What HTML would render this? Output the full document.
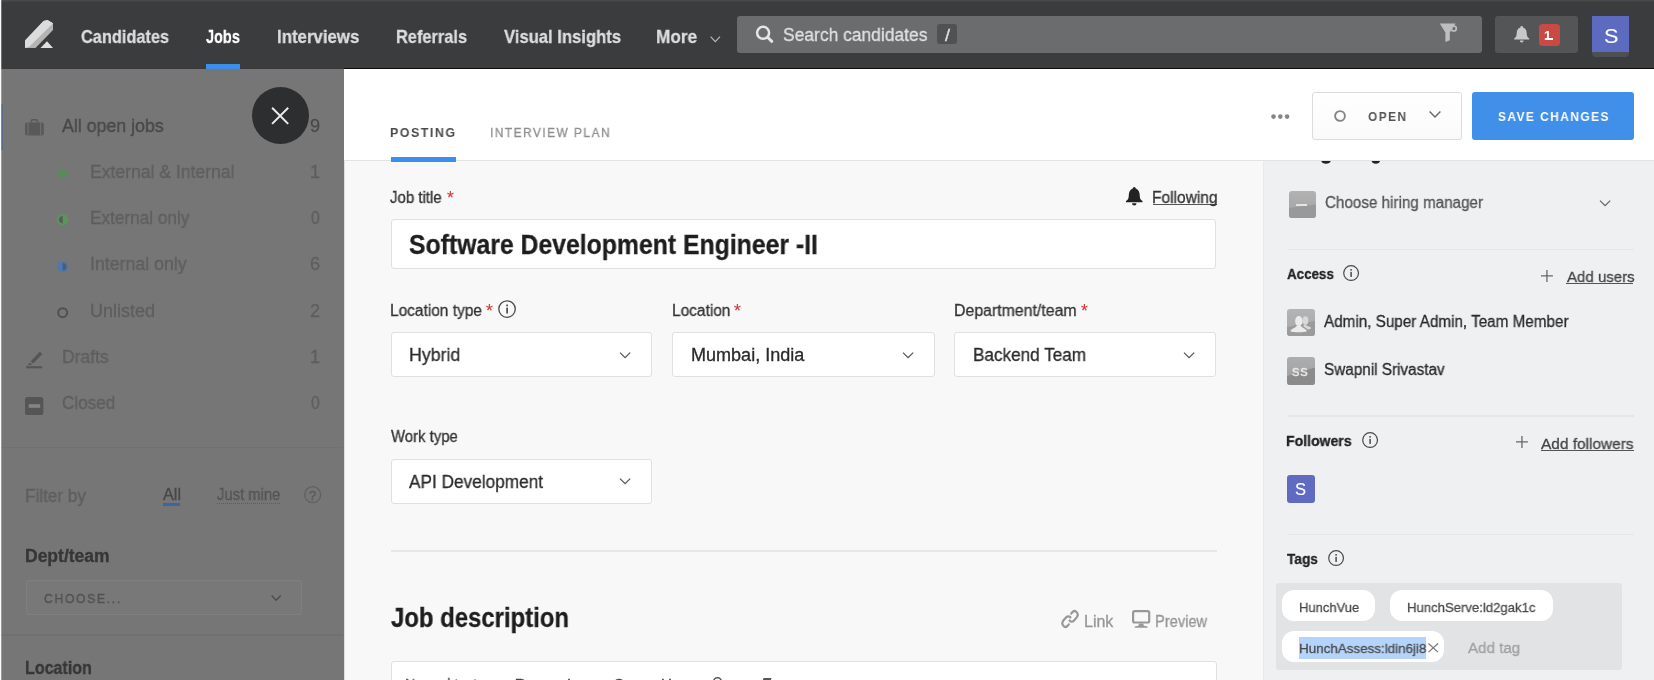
<!DOCTYPE html>
<html><head><meta charset="utf-8"><title>Jobs</title>
<style>
*{box-sizing:border-box;margin:0;padding:0}
html,body{width:1654px;height:680px;overflow:hidden;background:#fff;font-family:"Liberation Sans",sans-serif}
body{position:relative}
.a{position:absolute}
.t{-webkit-text-stroke:0.3px;will-change:transform;position:absolute;white-space:pre;line-height:1;transform-origin:0 50%;font-family:"Liberation Sans",sans-serif}
svg{position:absolute;overflow:visible}

</style></head>
<body>
<!-- backgrounds -->
<div class="a" style="left:0;top:69px;width:344px;height:611px;background:#767676"></div>
<div class="a" style="left:344px;top:161px;width:919px;height:519px;background:#f8f8f8;border-left:1px solid #dedede"></div>
<div class="a" style="left:1263px;top:161px;width:391px;height:519px;background:#eff0f2;box-shadow:inset 1px 0 0 #e9eaec"></div>
<!-- hiring manager cut-off text hint (descenders of g) -->
<svg style="left:1320px;top:158px" width="64" height="8" viewBox="0 0 64 8"><path d="M1.2,2.5 C1.5,6.8 10.5,6.8 10.8,2.5 Z" fill="#222"/><path d="M51.5,2.5 C51.8,6.8 59.8,6.8 60.1,2.5 Z" fill="#222"/></svg>
<!-- main header (white) -->
<div class="a" style="left:344px;top:69px;width:1310px;height:92px;background:#fff;border-bottom:1px solid #e1e3e4"></div>

<!-- NAV -->
<div class="a" style="left:0;top:0;width:1654px;height:69px;background:#3b3c3e;border-bottom:1px solid #0c0c0d"></div>
<div class="a" style="left:0;top:68px;width:344px;height:1px;background:#39393b"></div>
<div class="a" style="left:0;top:0;width:1654px;height:2px;background:linear-gradient(#4c4d4f,#3f4042)"></div>
<div class="a" style="left:206px;top:64px;width:34px;height:5px;background:#3d8eea"></div>
<!-- logo -->
<svg style="left:25px;top:20px" width="28" height="28" viewBox="0 0 28 28">
  <polygon points="0,20.5 18.5,1 22.5,0 28,3.2 28,10 10.5,28 0,28" fill="#b4b4b4"/>
  <polygon points="0,20.5 18.5,1 22.5,0 28,3.2 4.5,26.5 0,28" fill="#dcdcdc"/>
  <polygon points="15.5,28 22,21.2 28,28" fill="#e0e0e0"/>
</svg>
<!-- more chevron -->
<svg style="left:710px;top:36px" width="11" height="7" viewBox="0 0 11 7"><polyline points="0.6,0.6 5.3,5.6 10,0.6" fill="none" stroke="#b8b8b8" stroke-width="1.2"/></svg>
<!-- search box -->
<div class="a" style="left:737px;top:15.5px;width:744.5px;height:37px;background:#6b6c6e;border-radius:3px"></div>
<svg style="left:755px;top:25px" width="19" height="19" viewBox="0 0 19 19"><circle cx="8.1" cy="7.8" r="6" fill="none" stroke="#e6e6e6" stroke-width="2.5"/><line x1="12.8" y1="12.5" x2="16.8" y2="16.3" stroke="#e6e6e6" stroke-width="3" stroke-linecap="round"/></svg>
<div class="a" style="left:937.4px;top:24px;width:20px;height:20px;background:#505153;border-radius:3px"></div>
<!-- filter icon -->
<svg style="left:1439px;top:23px" width="19" height="20" viewBox="0 0 19 20"><path d="M0.8,0.5 H16.6 L10.8,9.6 V17.2 L6.4,19 V9.5 Z" fill="#bebebe"/><circle cx="14.8" cy="5.5" r="2.5" fill="none" stroke="#bebebe" stroke-width="1.7"/></svg>
<!-- bell box -->
<div class="a" style="left:1495.4px;top:15.5px;width:82.6px;height:37px;background:#545557;border-radius:3px"></div>
<svg style="left:1514px;top:26px" width="15.4" height="16.6" viewBox="0 0 16 17"><path d="M8,0 C8.9,0 9.4,0.6 9.4,1.4 C12,2.2 13.2,4.5 13.2,7.5 C13.2,10.5 14,11.6 15.8,12.8 V13.9 H0.2 V12.8 C2,11.6 2.8,10.5 2.8,7.5 C2.8,4.5 4,2.2 6.6,1.4 C6.6,0.6 7.1,0 8,0 Z" fill="#c8c8c8"/><path d="M6,14.9 H10 A2,2 0 0 1 6,14.9Z" fill="#c8c8c8"/></svg>
<div class="a" style="left:1539.3px;top:24.4px;width:20.8px;height:21.2px;background:#c94a45;border-radius:3.5px"></div>
<div class="a" style="left:1544.8px;top:38.4px;width:8px;height:1.6px;background:#fff"></div>
<!-- avatar -->
<div class="a" style="left:1592.2px;top:40px;width:37.2px;height:16.6px;background:#4e4f52;border-radius:0 0 4px 4px"></div>
<div class="a" style="left:1592.2px;top:15.6px;width:37.2px;height:36.8px;background:#5c6bc0"></div>

<!-- close button -->
<div class="a" style="left:252.1px;top:87.3px;width:57.2px;height:57.2px;border-radius:50%;background:#2d2e30"></div>
<svg style="left:271.4px;top:106.6px" width="18.3" height="17.7" viewBox="0 0 18 18"><path d="M0.8,0.8 L17.2,17.2 M17.2,0.8 L0.8,17.2" stroke="#ececec" stroke-width="2" fill="none"/></svg>

<!-- HEADER RIGHT -->
<svg style="left:1270.7px;top:113.6px" width="18.6" height="5.2" viewBox="0 0 18.6 5.2"><circle cx="2.5" cy="2.6" r="2.3" fill="#858585"/><circle cx="9.3" cy="2.6" r="2.3" fill="#858585"/><circle cx="16.1" cy="2.6" r="2.3" fill="#858585"/></svg>
<div class="a" style="left:1312.4px;top:92.4px;width:150.1px;height:47.2px;background:linear-gradient(#fff,#fafafa);border:1px solid #dcdcdc;border-radius:3px"></div>
<svg style="left:1333.8px;top:110.4px" width="12" height="12" viewBox="0 0 12 12"><circle cx="6" cy="6" r="4.9" fill="none" stroke="#858585" stroke-width="1.9"/></svg>
<svg style="left:1429px;top:111px" width="12" height="7" viewBox="0 0 12 7"><polyline points="0.6,0.6 6,6.1 11.4,0.6" fill="none" stroke="#666" stroke-width="1.4"/></svg>
<div class="a" style="left:1472px;top:92.4px;width:161.5px;height:47.2px;background:#408fe9;border-radius:3px"></div>

<!-- tabs underline -->
<div class="a" style="left:390.5px;top:157.4px;width:65.5px;height:4.6px;background:#3d8eea"></div>

<!-- FORM -->
<svg style="left:1125.9px;top:186.7px" width="16.5" height="18.7" viewBox="0 0 16 18"><path d="M8,0 C8.9,0 9.4,0.7 9.4,1.5 C12,2.4 13.3,4.8 13.3,8 C13.3,11.2 14,12.4 16,13.6 V14.8 H0 V13.6 C2,12.4 2.7,11.2 2.7,8 C2.7,4.8 4,2.4 6.6,1.5 C6.6,0.7 7.1,0 8,0 Z" fill="#222"/><path d="M5.8,15.8 H10.2 A2.2,2.2 0 0 1 5.8,15.8Z" fill="#222"/></svg>
<div class="a" style="left:1153px;top:204px;width:63.5px;height:1.2px;background:#555"></div>
<div class="a" style="left:390.8px;top:219px;width:825.4px;height:50px;background:#fff;border:1px solid #dfe0e1;border-radius:3px"></div>
<!-- info icon near location type -->
<svg style="left:498.3px;top:300px" width="18.1" height="18.1" viewBox="0 0 18 18"><circle cx="9" cy="9" r="8.2" fill="none" stroke="#4a4a4a" stroke-width="1.3"/><rect x="8.2" y="7.6" width="1.7" height="5.8" fill="#4a4a4a"/><rect x="8.2" y="4.5" width="1.7" height="1.8" fill="#4a4a4a"/></svg>
<div class="a" style="left:390.9px;top:332.1px;width:261.6px;height:45.3px;background:#fff;border:1px solid #dfe0e1;border-radius:3px"></div>
<div class="a" style="left:672.3px;top:332.1px;width:262.5px;height:45.3px;background:#fff;border:1px solid #dfe0e1;border-radius:3px"></div>
<div class="a" style="left:954.1px;top:332.1px;width:261.9px;height:45.3px;background:#fff;border:1px solid #dfe0e1;border-radius:3px"></div>
<div class="a" style="left:390.9px;top:458.5px;width:261.6px;height:45.3px;background:#fff;border:1px solid #dfe0e1;border-radius:3px"></div>
<svg style="left:619.4px;top:351.7px" width="12.2" height="6.6" viewBox="0 0 12 7"><polyline points="0.6,0.6 6,6.1 11.4,0.6" fill="none" stroke="#555" stroke-width="1.3"/></svg>
<svg style="left:901.8px;top:351.7px" width="12.2" height="6.6" viewBox="0 0 12 7"><polyline points="0.6,0.6 6,6.1 11.4,0.6" fill="none" stroke="#555" stroke-width="1.3"/></svg>
<svg style="left:1182.9px;top:351.7px" width="12.2" height="6.6" viewBox="0 0 12 7"><polyline points="0.6,0.6 6,6.1 11.4,0.6" fill="none" stroke="#555" stroke-width="1.3"/></svg>
<svg style="left:619.4px;top:477.9px" width="12.2" height="6.6" viewBox="0 0 12 7"><polyline points="0.6,0.6 6,6.1 11.4,0.6" fill="none" stroke="#555" stroke-width="1.3"/></svg>
<div class="a" style="left:391px;top:550px;width:826px;height:2px;background:#e7e7e8"></div>
<!-- link icon (diagonal chain) -->
<svg style="left:1061.4px;top:610.2px" width="18" height="18" viewBox="0 0 18 18"><g transform="translate(0.2,-1.2) scale(0.98,1.13)" fill="none" stroke="#989898" stroke-width="2.1" stroke-linecap="round"><path d="M10.2,4.2 L11.6,2.8 a3.2,3.2 0 0 1 4.5,4.5 L13,10.4 a3.2,3.2 0 0 1 -4.5,0"/><path d="M7.8,13.8 L6.4,15.2 a3.2,3.2 0 0 1 -4.5,-4.5 L5,7.6 a3.2,3.2 0 0 1 4.5,0"/></g></svg>
<!-- preview icon -->
<svg style="left:1131.8px;top:610.2px" width="18.3" height="17.8" viewBox="0 0 18.3 17.8"><rect x="1.1" y="1.1" width="16.1" height="11.4" rx="1.6" fill="none" stroke="#989898" stroke-width="2.2"/><path d="M7,13.4 H11.3 L11.8,15.8 L15.6,16.6 V17.8 H2.7 V16.6 L6.5,15.8 Z" fill="#989898"/></svg>
<!-- editor box -->
<div class="a" style="left:390.5px;top:661px;width:826px;height:30px;background:#fff;border:1px solid #dfe0e1;border-radius:3px 3px 0 0"></div>
<svg style="left:712px;top:676px" width="11" height="6" viewBox="0 0 11 6"><path d="M1.5,6 a4,4.2 0 0 1 8,0" fill="none" stroke="#555" stroke-width="1.6"/></svg>
<div class="a" style="left:763px;top:677.5px;width:8px;height:3px;background:#555;transform:skewX(-20deg)"></div>

<!-- RIGHT SIDEBAR -->
<div class="a" style="left:1288.5px;top:190.5px;width:27.5px;height:27.9px;border-radius:3px;overflow:hidden;background:linear-gradient(#b2b2b2,#a3a3a3)"><div class="a" style="left:-4px;top:15px;width:40px;height:20px;background:#999;transform:rotate(-7deg)"></div></div>
<div class="a" style="left:1296.3px;top:203.8px;width:10.5px;height:2.1px;background:#e4e4e4"></div>
<svg style="left:1599px;top:199.6px" width="12.2" height="6.6" viewBox="0 0 12 7"><polyline points="0.6,0.6 6,6.1 11.4,0.6" fill="none" stroke="#666" stroke-width="1.3"/></svg>
<div class="a" style="left:1288px;top:248.6px;width:346px;height:1.2px;background:#e5e6e8"></div>
<div class="a" style="left:1288px;top:415.4px;width:346px;height:1.2px;background:#e5e6e8"></div>
<div class="a" style="left:1288px;top:534px;width:346px;height:1.2px;background:#e5e6e8"></div>
<!-- info icons -->
<svg style="left:1343.3px;top:265.3px" width="16.2" height="16.2" viewBox="0 0 16 16"><circle cx="8" cy="8" r="7.3" fill="none" stroke="#4a4a4a" stroke-width="1.2"/><rect x="7.25" y="6.8" width="1.5" height="5" fill="#4a4a4a"/><rect x="7.25" y="4" width="1.5" height="1.6" fill="#4a4a4a"/></svg>
<svg style="left:1362px;top:432px" width="16.2" height="16.2" viewBox="0 0 16 16"><circle cx="8" cy="8" r="7.3" fill="none" stroke="#4a4a4a" stroke-width="1.2"/><rect x="7.25" y="6.8" width="1.5" height="5" fill="#4a4a4a"/><rect x="7.25" y="4" width="1.5" height="1.6" fill="#4a4a4a"/></svg>
<svg style="left:1328.3px;top:550.2px" width="16.2" height="16.2" viewBox="0 0 16 16"><circle cx="8" cy="8" r="7.3" fill="none" stroke="#4a4a4a" stroke-width="1.2"/><rect x="7.25" y="6.8" width="1.5" height="5" fill="#4a4a4a"/><rect x="7.25" y="4" width="1.5" height="1.6" fill="#4a4a4a"/></svg>
<!-- plus icons -->
<svg style="left:1541.3px;top:269.6px" width="11.9" height="11.9" viewBox="0 0 12 12"><path d="M6,0 V12 M0,6 H12" stroke="#666" stroke-width="1.3"/></svg>
<svg style="left:1516.4px;top:436.4px" width="11.9" height="11.9" viewBox="0 0 12 12"><path d="M6,0 V12 M0,6 H12" stroke="#666" stroke-width="1.3"/></svg>
<div class="a" style="left:1566.2px;top:282.7px;width:67.2px;height:1.3px;background:#555"></div>
<div class="a" style="left:1541.1px;top:450px;width:92.5px;height:1.3px;background:#555"></div>
<!-- avatars -->
<div class="a" style="left:1287.3px;top:308.6px;width:27.4px;height:27.9px;border-radius:3px;overflow:hidden;background:linear-gradient(#b4b4b4,#a8a8a8)"><div class="a" style="left:-6px;top:15.2px;width:42px;height:24px;background:#9b9b9b;transform:rotate(-13deg)"></div></div>
<svg style="left:1287.3px;top:308.6px" width="27.4" height="27.9" viewBox="0 0 27.4 27.9"><g fill="#d9d9d9"><ellipse cx="18.4" cy="11.6" rx="2.9" ry="4.4"/><path d="M17.2,15.4 L23.6,18.2 C24.3,18.8 24.1,19.7 23.1,20.1 L20.6,20.5 C19.8,18.9 17.4,18.4 16.2,17.2 Z"/></g><g fill="#ebebeb"><ellipse cx="11.8" cy="12.1" rx="3.7" ry="5.1"/><path d="M3.5,22.6 C3.5,19.5 8.5,19.7 9.8,16.6 H13.8 C15.1,19.7 19.7,19.5 19.7,22.6 C17,23.5 6,23.5 3.5,22.6 Z"/></g></svg>
<div class="a" style="left:1287.3px;top:357.1px;width:27.5px;height:27.5px;border-radius:3px;overflow:hidden;background:linear-gradient(#adadad,#a0a0a0)"><div class="a" style="left:-6px;top:15.4px;width:42px;height:24px;background:#8b8b8b;transform:rotate(-17deg)"></div></div>
<div class="a" style="left:1287px;top:475.3px;width:27.8px;height:27.7px;border-radius:3px;background:#5f6bc1"></div>
<!-- tags -->
<div class="a" style="left:1275.6px;top:583.3px;width:346.3px;height:86.3px;background:#e2e3e5;border-radius:3px"></div>
<div class="a" style="left:1281.6px;top:590.2px;width:93.5px;height:31.3px;border-radius:12px;background:#fff"></div>
<div class="a" style="left:1389.7px;top:590.2px;width:163.3px;height:31.3px;border-radius:12px;background:#fff"></div>
<div class="a" style="left:1281.6px;top:631.4px;width:162.2px;height:30.8px;border-radius:12px;background:#fff"></div>
<div class="a" style="left:1299.1px;top:637px;width:127.1px;height:21.9px;background:#b5d4fb"></div>
<svg style="left:1428.4px;top:643.2px" width="10.5" height="9.6" viewBox="0 0 11 10"><path d="M0.5,0.5 L10.5,9.5 M10.5,0.5 L0.5,9.5" stroke="#777" stroke-width="1.3"/></svg>

<!-- LEFT SIDEBAR -->
<!-- briefcase -->
<svg style="left:25.4px;top:119px" width="18.8" height="16.4" viewBox="0 0 18.8 16.4"><path d="M6.4,3.6 V1.8 a1,1 0 0 1 1,-1 h4 a1,1 0 0 1 1,1 V3.6" fill="none" stroke="#595959" stroke-width="1.5"/><rect x="0" y="3.4" width="18.8" height="13" rx="2" fill="#595959"/><rect x="2.6" y="3.4" width="0.9" height="13" fill="#767676"/><rect x="15.3" y="3.4" width="0.9" height="13" fill="#767676"/></svg>
<!-- status dots -->
<svg style="left:56.9px;top:168.1px" width="11" height="11" viewBox="0 0 11 11"><circle cx="5.5" cy="5.5" r="4.6" fill="#598a5c"/></svg>
<svg style="left:56.7px;top:214.3px" width="11.4" height="11.4" viewBox="0 0 11.4 11.4"><circle cx="5.7" cy="5.7" r="4.7" fill="#5a5a5a" stroke="#5a955e" stroke-width="1.9"/><path d="M5.7,1 a4.7,4.7 0 0 1 0,9.4 Z" fill="#5a955e"/></svg>
<svg style="left:56.7px;top:260.6px" width="11.4" height="11.4" viewBox="0 0 11.4 11.4"><circle cx="5.7" cy="5.7" r="4.7" fill="#5a5a5a" stroke="#4a79b6" stroke-width="1.9"/><path d="M5.7,1 a4.7,4.7 0 0 0 0,9.4 Z" fill="#4a79b6"/></svg>
<svg style="left:56.7px;top:306.8px" width="11.4" height="11.4" viewBox="0 0 11.4 11.4"><circle cx="5.7" cy="5.7" r="4.5" fill="none" stroke="#505050" stroke-width="2"/></svg>
<!-- drafts icon -->
<svg style="left:26.4px;top:351.4px" width="17.5" height="17.5" viewBox="0 0 17.5 17.5"><path d="M4.6,10.6 L13.8,0.8 L16.4,3 L7.2,12.6 Z" fill="#555"/><path d="M3.6,11.6 L6.2,13.6 L1.6,14.6 Z" fill="#555"/><rect x="0.2" y="15.2" width="16" height="2.1" fill="#555"/></svg>
<!-- closed icon -->
<svg style="left:25.4px;top:396.7px" width="18.3" height="18.1" viewBox="0 0 18.3 18.1"><rect x="0" y="0" width="18.3" height="18.1" rx="2.6" fill="#555"/><rect x="3.7" y="7.3" width="11.5" height="3.5" rx="0.5" fill="#858585"/></svg>
<div class="a" style="left:0;top:447px;width:343px;height:1.4px;background:#707070"></div>
<div class="a" style="left:162.9px;top:503.4px;width:17px;height:3.1px;background:#3a66a8"></div>
<div class="a" style="left:217.3px;top:503.2px;width:63.1px;height:0;border-top:1px dotted #5c5c5c"></div>
<svg style="left:303.7px;top:485.8px" width="17.4" height="17.4" viewBox="0 0 17.4 17.4"><circle cx="8.7" cy="8.7" r="8" fill="none" stroke="#606060" stroke-width="1.3"/></svg>
<div class="a" style="left:26px;top:579.6px;width:275.6px;height:35.4px;border:1px solid #7f7f7f;border-radius:3px;background:#787878"></div>
<svg style="left:271px;top:594.7px" width="10.3" height="6" viewBox="0 0 10.3 6"><polyline points="0.6,0.5 5.15,5.2 9.7,0.5" fill="none" stroke="#4c4c4c" stroke-width="1.3"/></svg>
<div class="a" style="left:0;top:634.2px;width:343px;height:1.4px;background:#707070"></div>
<!-- left edge strip -->
<div class="a" style="left:0;top:0;width:1px;height:680px;background:#fbfbfb"></div>
<div class="a" style="left:1px;top:0;width:1px;height:680px;background:rgba(255,255,255,0.27)"></div>
<div class="a" style="left:1px;top:104px;width:1px;height:46px;background:#7088ae"></div>
<div class="a" style="left:2px;top:104px;width:1px;height:46px;background:rgba(58,95,150,0.45)"></div>

<span class="t" style="left:81.00px;top:28px;font-size:18.5px;color:#dddddd;font-weight:700;transform:scaleX(0.8825);">Candidates</span>
<span class="t" style="left:205.90px;top:28px;font-size:18.5px;color:#ffffff;font-weight:700;transform:scaleX(0.7828);">Jobs</span>
<span class="t" style="left:276.80px;top:28px;font-size:18.5px;color:#dddddd;font-weight:700;transform:scaleX(0.9096);">Interviews</span>
<span class="t" style="left:395.60px;top:28px;font-size:18.5px;color:#dddddd;font-weight:700;transform:scaleX(0.8853);">Referrals</span>
<span class="t" style="left:503.80px;top:28px;font-size:18.5px;color:#dddddd;font-weight:700;transform:scaleX(0.8984);">Visual Insights</span>
<span class="t" style="left:656.40px;top:28px;font-size:18.5px;color:#dddddd;font-weight:700;transform:scaleX(0.9281);">More</span>
<span class="t" style="left:783.00px;top:25px;font-size:19px;color:#e0e0e0;transform:scaleX(0.9175);">Search candidates</span>
<span class="t" style="left:945.00px;top:28px;font-size:16px;color:#e0e0e0;transform:scaleX(1.1228);">/</span>
<span class="t" style="left:1543.90px;top:29px;font-size:13px;color:#fff;font-weight:700;-webkit-text-stroke:0;">1</span>
<span class="t" style="left:1603.80px;top:25px;font-size:21px;color:#fff;transform:scaleX(1.0306);-webkit-text-stroke:0.1px;">S</span>
<span class="t" style="left:389.90px;top:126px;font-size:13px;color:#4a4a4a;font-weight:700;letter-spacing:1.6px;transform:scaleX(0.9552);-webkit-text-stroke:0;">POSTING</span>
<span class="t" style="left:489.90px;top:126px;font-size:13px;color:#8e8e8e;letter-spacing:1.6px;transform:scaleX(0.9175);">INTERVIEW PLAN</span>
<span class="t" style="left:1368.20px;top:110px;font-size:13px;color:#555;font-weight:700;letter-spacing:1.6px;transform:scaleX(0.9130);-webkit-text-stroke:0;">OPEN</span>
<span class="t" style="left:1497.60px;top:110px;font-size:13px;color:#fff;font-weight:700;letter-spacing:1.6px;transform:scaleX(0.9152);-webkit-text-stroke:0;">SAVE CHANGES</span>
<span class="t" style="left:390.40px;top:190px;font-size:16px;color:#333;transform:scaleX(0.9358);">Job title</span>
<span class="t" style="left:447.00px;top:190px;font-size:17.5px;color:#cf3a35;-webkit-text-stroke:0.1px;">*</span>
<span class="t" style="left:1152.00px;top:190px;font-size:16px;color:#333;transform:scaleX(0.9698);">Following</span>
<span class="t" style="left:409.00px;top:232px;font-size:27px;color:#1e1e1e;font-weight:700;transform:scaleX(0.9179);">Software Development Engineer -II</span>
<span class="t" style="left:389.90px;top:303px;font-size:16px;color:#333;transform:scaleX(0.9657);">Location type</span>
<span class="t" style="left:486.00px;top:303px;font-size:17.5px;color:#cf3a35;-webkit-text-stroke:0.1px;">*</span>
<span class="t" style="left:672.10px;top:303px;font-size:16px;color:#333;transform:scaleX(0.9662);">Location</span>
<span class="t" style="left:734.20px;top:303px;font-size:17.5px;color:#cf3a35;-webkit-text-stroke:0.1px;">*</span>
<span class="t" style="left:953.50px;top:303px;font-size:16px;color:#333;transform:scaleX(0.9920);">Department/team</span>
<span class="t" style="left:1080.80px;top:303px;font-size:17.5px;color:#cf3a35;-webkit-text-stroke:0.1px;">*</span>
<span class="t" style="left:408.70px;top:346px;font-size:18px;color:#2a2a2a;transform:scaleX(0.9862);">Hybrid</span>
<span class="t" style="left:690.60px;top:346px;font-size:18px;color:#2a2a2a;transform:scaleX(1.0022);">Mumbai, India</span>
<span class="t" style="left:972.60px;top:346px;font-size:18px;color:#2a2a2a;transform:scaleX(0.9519);">Backend Team</span>
<span class="t" style="left:390.70px;top:429px;font-size:16px;color:#333;transform:scaleX(0.9313);">Work type</span>
<span class="t" style="left:409.00px;top:473px;font-size:18px;color:#2a2a2a;transform:scaleX(0.9573);">API Development</span>
<span class="t" style="left:390.50px;top:605px;font-size:27px;color:#1e1e1e;font-weight:700;transform:scaleX(0.8855);">Job description</span>
<span class="t" style="left:1084.20px;top:614px;font-size:16px;color:#969696;transform:scaleX(0.9930);">Link</span>
<span class="t" style="left:1154.50px;top:614px;font-size:16px;color:#969696;transform:scaleX(0.9157);">Preview</span>
<span class="t" style="left:405.00px;top:676px;font-size:15px;color:#555;transform:scaleX(0.9389);">Normal text</span>
<span class="t" style="left:514.50px;top:676px;font-size:15px;color:#444;font-weight:700;">B</span>
<span class="t" style="left:567.00px;top:676px;font-size:15px;color:#444;">I</span>
<span class="t" style="left:613.50px;top:676px;font-size:15px;color:#444;">S</span>
<span class="t" style="left:661.00px;top:676px;font-size:15px;color:#444;">U</span>
<span class="t" style="left:1324.90px;top:195px;font-size:16px;color:#555;transform:scaleX(0.9500);">Choose hiring manager</span>
<span class="t" style="left:1286.90px;top:266px;font-size:15px;color:#222;font-weight:700;transform:scaleX(0.8926);">Access</span>
<span class="t" style="left:1566.60px;top:269px;font-size:15.5px;color:#444;transform:scaleX(0.9686);">Add users</span>
<span class="t" style="left:1323.90px;top:314px;font-size:16px;color:#2a2a2a;transform:scaleX(0.9525);">Admin, Super Admin, Team Member</span>
<span class="t" style="left:1324.00px;top:362px;font-size:16px;color:#2a2a2a;transform:scaleX(0.9551);">Swapnil Srivastav</span>
<span class="t" style="left:1292.40px;top:363px;font-size:15px;color:#e8e8e8;letter-spacing:0.8px;">ss</span>
<span class="t" style="left:1286.40px;top:433px;font-size:15px;color:#222;font-weight:700;transform:scaleX(0.9373);">Followers</span>
<span class="t" style="left:1541.30px;top:436px;font-size:15.5px;color:#444;transform:scaleX(0.9942);">Add followers</span>
<span class="t" style="left:1295.00px;top:482px;font-size:16px;color:#fff;transform:scaleX(1.0332);-webkit-text-stroke:0.1px;">S</span>
<span class="t" style="left:1287.40px;top:551px;font-size:15px;color:#222;font-weight:700;transform:scaleX(0.9116);">Tags</span>
<span class="t" style="left:1298.50px;top:601px;font-size:13.5px;color:#4a4a4a;transform:scaleX(0.9632);">HunchVue</span>
<span class="t" style="left:1406.80px;top:601px;font-size:13.5px;color:#4a4a4a;transform:scaleX(0.9729);">HunchServe:ld2gak1c</span>
<span class="t" style="left:1298.50px;top:642px;font-size:13.5px;color:#4a4a4a;transform:scaleX(0.9937);">HunchAssess:ldin6ji8</span>
<span class="t" style="left:1468.20px;top:640px;font-size:15.5px;color:#a0a0a0;transform:scaleX(0.9751);">Add tag</span>
<span class="t" style="left:62.20px;top:117px;font-size:18px;color:#474747;transform:scaleX(0.9867);">All open jobs</span>
<span class="t" style="left:310.20px;top:117px;font-size:18px;color:#4a4a4a;transform:scaleX(1.0055);">9</span>
<span class="t" style="left:89.70px;top:163px;font-size:18px;color:#5e5e5e;transform:scaleX(0.9760);">External &amp; Internal</span>
<span class="t" style="left:310.20px;top:163px;font-size:18px;color:#5e5e5e;">1</span>
<span class="t" style="left:89.70px;top:209px;font-size:18px;color:#5e5e5e;transform:scaleX(0.9552);">External only</span>
<span class="t" style="left:311.20px;top:209px;font-size:18px;color:#5e5e5e;transform:scaleX(0.8690);">0</span>
<span class="t" style="left:89.70px;top:255px;font-size:18px;color:#5e5e5e;transform:scaleX(0.9862);">Internal only</span>
<span class="t" style="left:310.20px;top:255px;font-size:18px;color:#5e5e5e;transform:scaleX(1.0055);">6</span>
<span class="t" style="left:89.70px;top:302px;font-size:18px;color:#5e5e5e;">Unlisted</span>
<span class="t" style="left:310.20px;top:302px;font-size:18px;color:#5e5e5e;transform:scaleX(1.0055);">2</span>
<span class="t" style="left:62.00px;top:348px;font-size:18px;color:#5e5e5e;transform:scaleX(0.9713);">Drafts</span>
<span class="t" style="left:310.20px;top:348px;font-size:18px;color:#5e5e5e;">1</span>
<span class="t" style="left:62.00px;top:394px;font-size:18px;color:#5e5e5e;transform:scaleX(0.9504);">Closed</span>
<span class="t" style="left:311.20px;top:394px;font-size:18px;color:#5e5e5e;transform:scaleX(0.8690);">0</span>
<span class="t" style="left:25.00px;top:488px;font-size:17.5px;color:#5e5e5e;transform:scaleX(0.9789);">Filter by</span>
<span class="t" style="left:162.70px;top:487px;font-size:16px;color:#484848;transform:scaleX(1.0158);">All</span>
<span class="t" style="left:216.90px;top:487px;font-size:16px;color:#555;transform:scaleX(0.9245);">Just mine</span>
<span class="t" style="left:308.90px;top:489px;font-size:13px;color:#5a5a5a;">?</span>
<span class="t" style="left:25.00px;top:548px;font-size:17.5px;color:#363636;font-weight:700;">Dept/team</span>
<span class="t" style="left:44.30px;top:592px;font-size:13px;color:#505050;letter-spacing:1.8px;transform:scaleX(0.9328);">CHOOSE...</span>
<span class="t" style="left:25.00px;top:660px;font-size:17.5px;color:#363636;font-weight:700;transform:scaleX(0.9165);">Location</span>
</body></html>
